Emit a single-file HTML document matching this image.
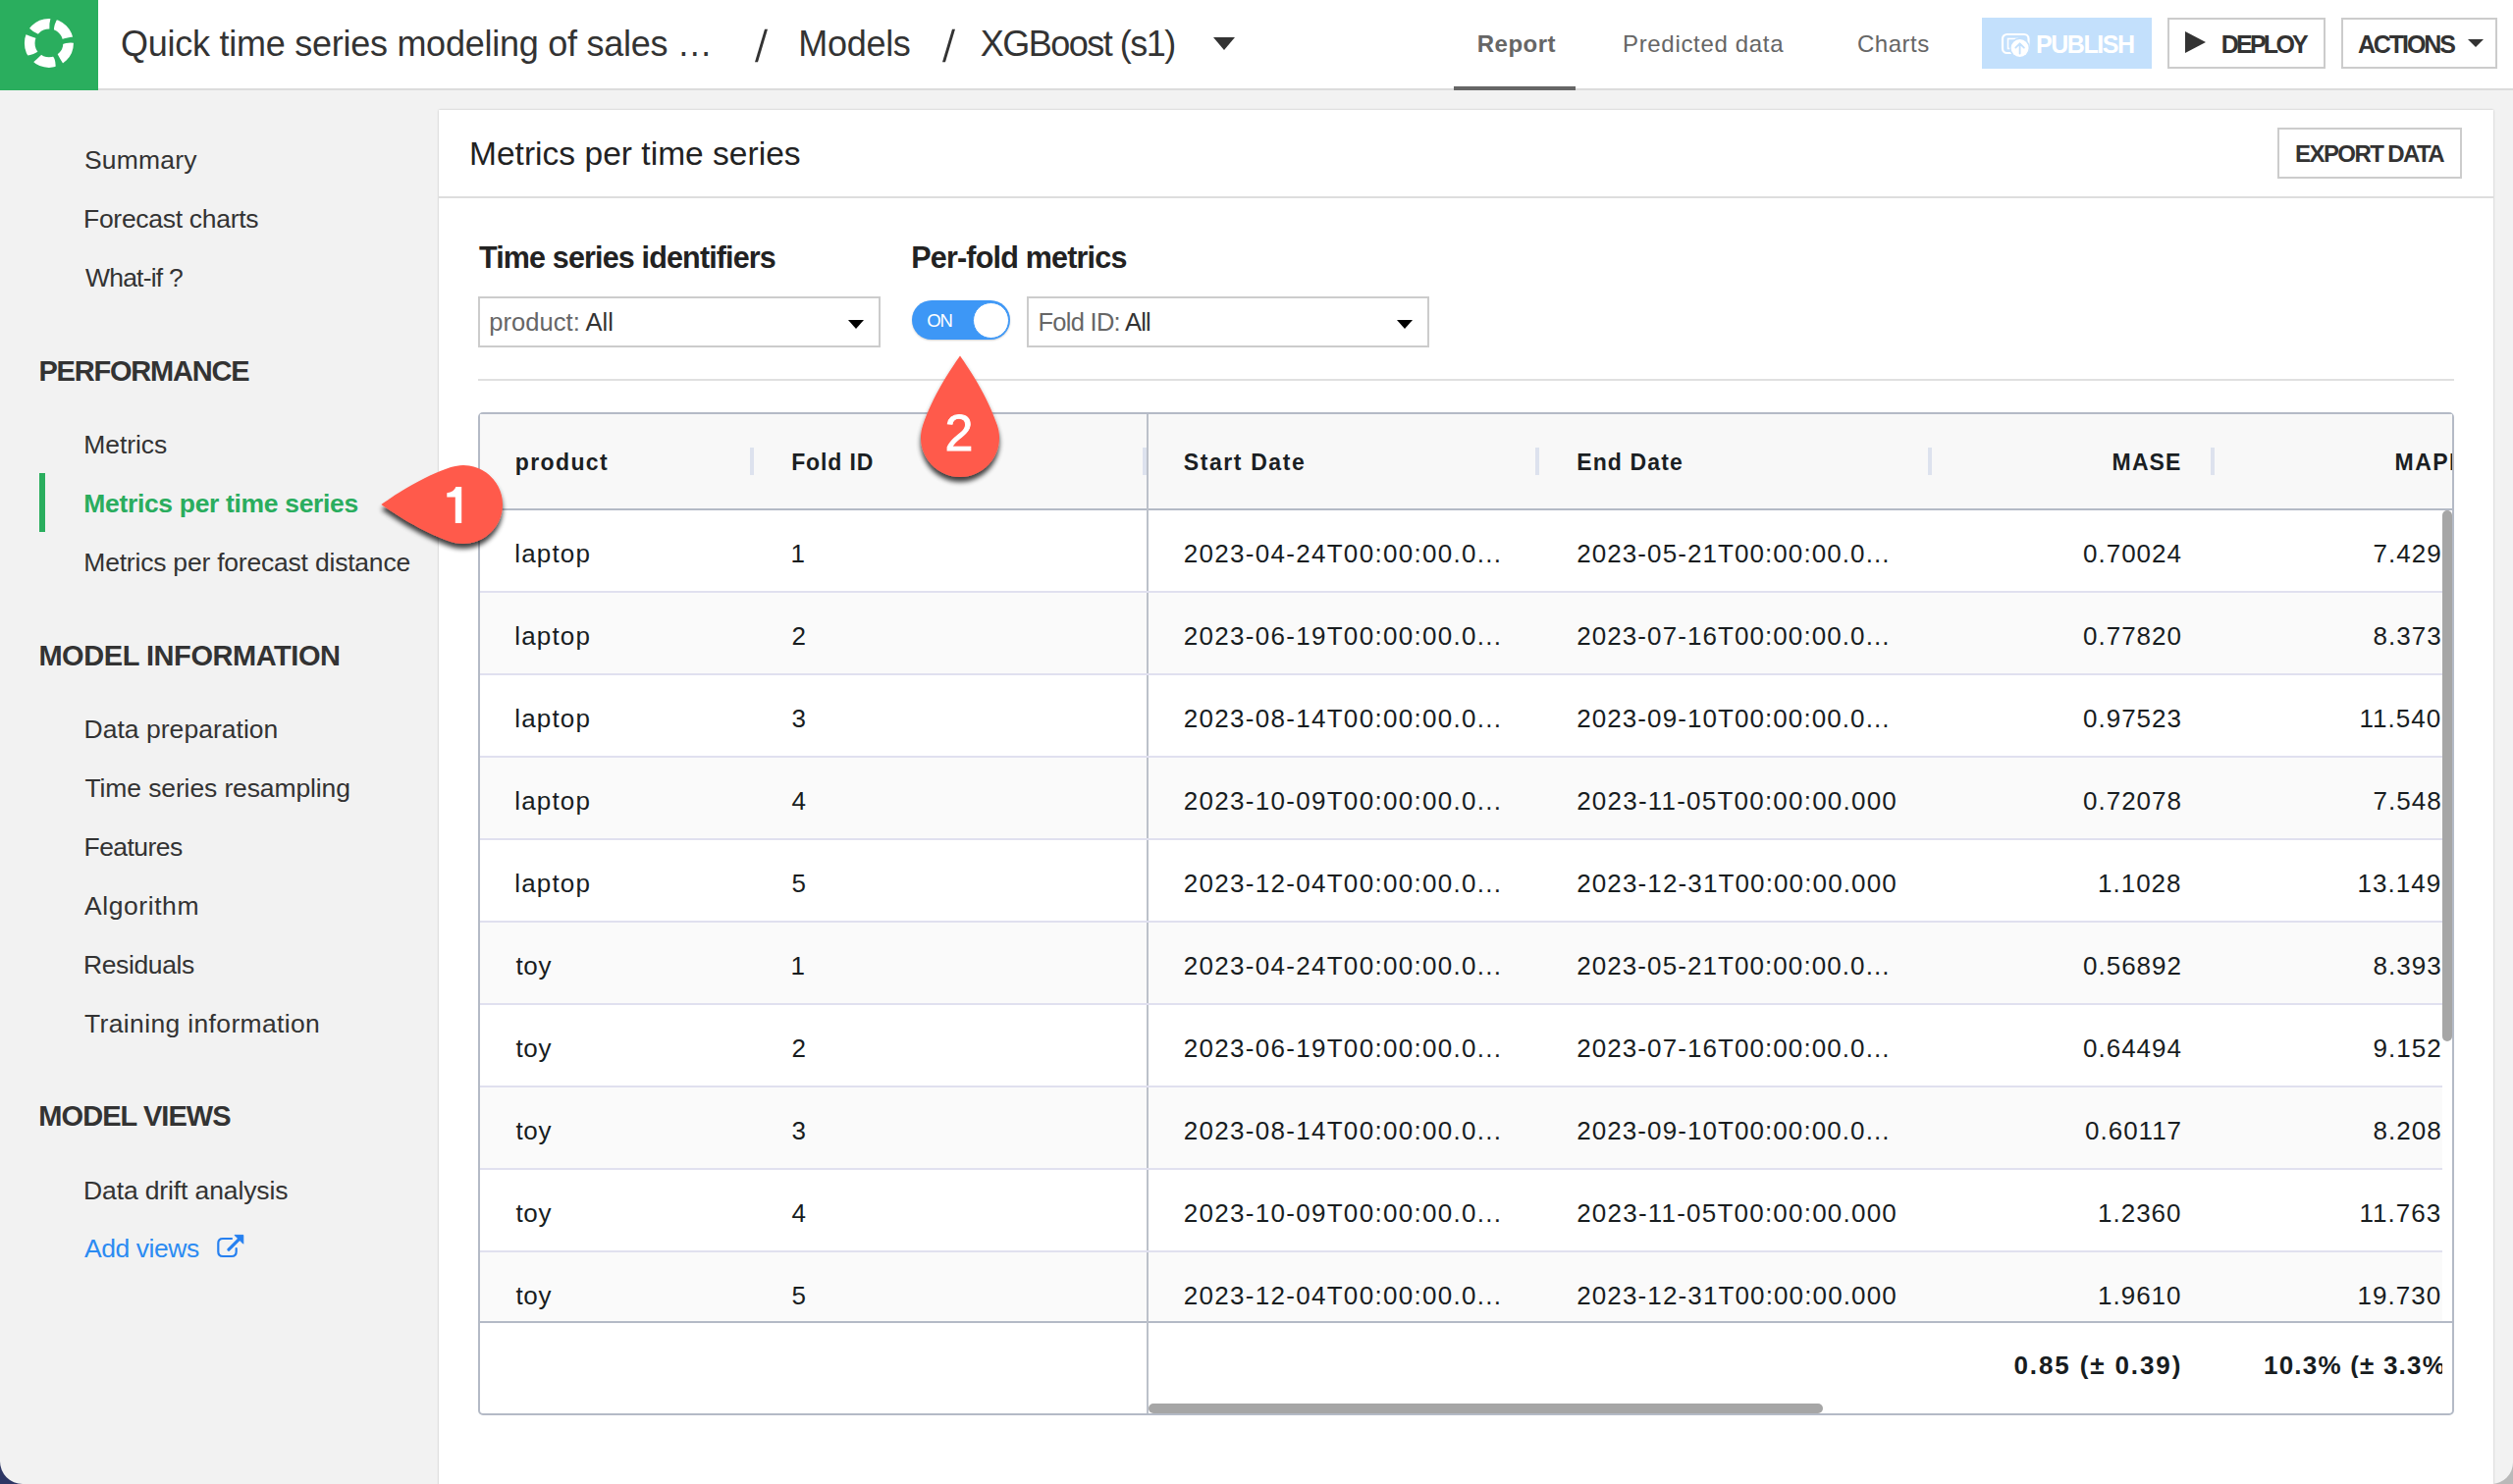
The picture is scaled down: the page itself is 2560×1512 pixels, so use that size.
<!DOCTYPE html>
<html><head><meta charset="utf-8">
<style>
html,body{margin:0;padding:0;}
body{width:2560px;height:1512px;overflow:hidden;position:relative;background:#f2f2f2;font-family:"Liberation Sans",sans-serif;}
.a{position:absolute;box-sizing:border-box;}
.t{position:absolute;white-space:pre;line-height:1;font-family:"Liberation Sans",sans-serif;}
</style></head><body>
<!-- top bar -->
<div class="a" style="left:0;top:0;width:2560px;height:90px;background:#fff;"></div>
<div class="a" style="left:0;top:90px;width:2560px;height:2px;background:#dcdcdc;"></div>
<div class="a" style="left:0;top:0;width:100px;height:92px;background:#2aae5e;"></div>
<svg class="a" style="left:0;top:0" width="100" height="91" viewBox="0 0 100 91">
  <g transform="translate(20,14) scale(0.040437)">
  <circle cx="740" cy="740" r="487" fill="none" stroke="#fff" stroke-width="262"/>
  <g fill="#2aae5e">
    <path d="M790 60 Q735 250 750 440 L860 440 Q860 260 980 80 Z"/>
    <path d="M1400 580 Q1190 590 1050 650 L1060 770 Q1220 705 1420 740 Z"/>
    <path d="M900 1420 Q930 1190 830 1050 L950 1010 Q1010 1130 1120 1300 Z"/>
    <path d="M180 1060 Q360 1040 490 930 L550 1030 Q440 1140 300 1260 Z"/>
    <path d="M200 330 Q330 460 480 520 L420 620 Q280 580 120 510 Z"/>
  </g>
  </g>
</svg>
<svg class="a" style="left:0;top:0" width="1000" height="92" viewBox="0 0 1000 92">
  <polygon points="779,29.8 782,29.8 772,63.3 769,63.3" fill="#333"/>
  <polygon points="970,29.8 973,29.8 963,63.3 960,63.3" fill="#333"/>
</svg>
<!-- breadcrumb caret -->
<div class="a" style="left:1236px;top:38px;width:0;height:0;border-left:11px solid transparent;border-right:11px solid transparent;border-top:13px solid #333;"></div>
<!-- tab underline -->
<div class="a" style="left:1481px;top:88px;width:124px;height:4px;background:#666;"></div>
<!-- publish button -->
<div class="a" style="left:2019px;top:18px;width:173px;height:52px;background:#c3e0fc;"></div>
<svg class="a" style="left:2036px;top:30px" width="36" height="32" viewBox="0 0 36 32">
  <rect x="4" y="5" width="26.5" height="19" rx="4.5" fill="none" stroke="#fff" stroke-width="2.2"/>
  <rect x="9.5" y="9.5" width="10" height="10" fill="none" stroke="#fff" stroke-width="1.6"/>
  <circle cx="21.6" cy="19" r="10.5" fill="#c3e0fc"/>
  <circle cx="21.6" cy="19" r="9" fill="#fff"/>
  <path d="M21.6 24.5 V14.5 M17.3 18.6 L21.6 14.3 L25.9 18.6" fill="none" stroke="#c3e0fc" stroke-width="1.8" stroke-linecap="round" stroke-linejoin="round"/>
</svg>
<!-- deploy button -->
<div class="a" style="left:2208px;top:18px;width:161px;height:52px;border:2px solid #cccccc;background:#fff;"></div>
<div class="a" style="left:2226px;top:32px;width:0;height:0;border-top:11.5px solid transparent;border-bottom:11.5px solid transparent;border-left:21px solid #333;"></div>
<!-- actions button -->
<div class="a" style="left:2385px;top:18px;width:159px;height:52px;border:2px solid #cccccc;background:#fff;"></div>
<div class="a" style="left:2514px;top:40px;width:0;height:0;border-left:8px solid transparent;border-right:8px solid transparent;border-top:8px solid #333;"></div>

<!-- sidebar -->
<div class="a" style="left:40px;top:482px;width:6px;height:60px;background:#2aae5e;"></div>
<svg class="a" style="left:218px;top:1255px" width="34" height="30" viewBox="218 1255 34 30">
  <path d="M236 1262 H227 Q222.3 1262 222.3 1266.7 V1275.3 Q222.3 1280 227 1280 H236 Q240.7 1280 240.7 1275.3 V1272" fill="none" stroke="#2680f0" stroke-width="2.2" stroke-linecap="round"/>
  <path d="M233 1273.2 L243 1263.2" stroke="#2680f0" stroke-width="3.2" stroke-linecap="round"/>
  <path d="M239 1258.4 H247.8 V1267.2 Z" fill="#2680f0" stroke="#2680f0" stroke-width="1" stroke-linejoin="round"/>
</svg>

<!-- panel -->
<div class="a" style="left:447px;top:112px;width:2093px;height:1420px;background:#fff;box-shadow:0 0 2px rgba(0,0,0,0.22);"></div>
<div class="a" style="left:447px;top:200px;width:2093px;height:2px;background:#dddddd;"></div>
<div class="a" style="left:2320px;top:130px;width:188px;height:52px;border:2px solid #cccccc;"></div>
<!-- filters -->
<div class="a" style="left:487px;top:302px;width:410px;height:52px;border:2px solid #cccccc;"></div>
<div class="a" style="left:864px;top:326px;width:0;height:0;border-left:8px solid transparent;border-right:8px solid transparent;border-top:9px solid #000;"></div>
<div class="a" style="left:929px;top:306px;width:100px;height:40px;border-radius:20px;background:#3d97f6;box-shadow:0 1px 2px rgba(0,0,0,0.18);"></div>
<div class="a" style="left:991px;top:307.5px;width:37px;height:37px;border-radius:50%;background:#fff;border:1.5px solid #3d97f6;"></div>
<div class="a" style="left:1046px;top:302px;width:410px;height:52px;border:2px solid #cccccc;"></div>
<div class="a" style="left:1423px;top:326px;width:0;height:0;border-left:8px solid transparent;border-right:8px solid transparent;border-top:9px solid #000;"></div>
<div class="a" style="left:487px;top:386px;width:2013px;height:2px;background:#e0e0e0;"></div>

<!-- table -->
<div class="a" style="left:487px;top:420px;width:2013px;height:1022px;border:2px solid #b4bac6;border-radius:5px;background:#fff;overflow:hidden;">
</div>
<div class="a" style="left:489px;top:422px;width:2009px;height:96px;background:#f8f8f8;"></div>
<div class="a" style="left:489px;top:518px;width:2009px;height:2px;background:#b4bac6;"></div>
<!-- rows -->
<div id="rows"></div>
<div class="a" style="left:489px;top:520px;width:1999px;height:82px;background:#ffffff;"></div>
<div class="a" style="left:489px;top:602px;width:1999px;height:2px;background:#e0e0ef;"></div>
<div class="a" style="left:489px;top:604px;width:1999px;height:82px;background:#fafafa;"></div>
<div class="a" style="left:489px;top:686px;width:1999px;height:2px;background:#e0e0ef;"></div>
<div class="a" style="left:489px;top:688px;width:1999px;height:82px;background:#ffffff;"></div>
<div class="a" style="left:489px;top:770px;width:1999px;height:2px;background:#e0e0ef;"></div>
<div class="a" style="left:489px;top:772px;width:1999px;height:82px;background:#fafafa;"></div>
<div class="a" style="left:489px;top:854px;width:1999px;height:2px;background:#e0e0ef;"></div>
<div class="a" style="left:489px;top:856px;width:1999px;height:82px;background:#ffffff;"></div>
<div class="a" style="left:489px;top:938px;width:1999px;height:2px;background:#e0e0ef;"></div>
<div class="a" style="left:489px;top:940px;width:1999px;height:82px;background:#fafafa;"></div>
<div class="a" style="left:489px;top:1022px;width:1999px;height:2px;background:#e0e0ef;"></div>
<div class="a" style="left:489px;top:1024px;width:1999px;height:82px;background:#ffffff;"></div>
<div class="a" style="left:489px;top:1106px;width:1999px;height:2px;background:#e0e0ef;"></div>
<div class="a" style="left:489px;top:1108px;width:1999px;height:82px;background:#fafafa;"></div>
<div class="a" style="left:489px;top:1190px;width:1999px;height:2px;background:#e0e0ef;"></div>
<div class="a" style="left:489px;top:1192px;width:1999px;height:82px;background:#ffffff;"></div>
<div class="a" style="left:489px;top:1274px;width:1999px;height:2px;background:#e0e0ef;"></div>
<div class="a" style="left:489px;top:1276px;width:1999px;height:70px;background:#fafafa;"></div>
<div class="a" style="left:489px;top:1346px;width:2009px;height:2px;background:#b4bac6;"></div>
<!-- pinned col border -->
<div class="a" style="left:1168px;top:422px;width:2px;height:1018px;background:#bcc1ca;"></div>
<div class="a" style="left:1168px;top:602px;width:2px;height:2px;background:#e0e0ef;"></div>
<div class="a" style="left:1168px;top:686px;width:2px;height:2px;background:#e0e0ef;"></div>
<div class="a" style="left:1168px;top:770px;width:2px;height:2px;background:#e0e0ef;"></div>
<div class="a" style="left:1168px;top:854px;width:2px;height:2px;background:#e0e0ef;"></div>
<div class="a" style="left:1168px;top:938px;width:2px;height:2px;background:#e0e0ef;"></div>
<div class="a" style="left:1168px;top:1022px;width:2px;height:2px;background:#e0e0ef;"></div>
<div class="a" style="left:1168px;top:1106px;width:2px;height:2px;background:#e0e0ef;"></div>
<div class="a" style="left:1168px;top:1190px;width:2px;height:2px;background:#e0e0ef;"></div>
<div class="a" style="left:1168px;top:1274px;width:2px;height:2px;background:#e0e0ef;"></div>
<!-- resize handles -->
<div class="a" style="left:764px;top:456px;width:4px;height:28px;background:#dde2ee;"></div>
<div class="a" style="left:1164px;top:456px;width:4px;height:28px;background:#dde2ee;"></div>
<div class="a" style="left:1564px;top:456px;width:4px;height:28px;background:#dde2ee;"></div>
<div class="a" style="left:1964px;top:456px;width:4px;height:28px;background:#dde2ee;"></div>
<div class="a" style="left:2252px;top:456px;width:4px;height:28px;background:#dde2ee;"></div>
<!-- scrollbars -->
<div class="a" style="left:2488px;top:520px;width:10px;height:541px;background:#a6a6a6;border-radius:5px;"></div>
<div class="a" style="left:1170px;top:1430px;width:687px;height:10px;background:#a6a6a6;border-radius:5px 5px 5px 5px;"></div>

<div class="t" style="left:123.0px;top:27.0px;font-size:36px;font-weight:400;color:#333333;letter-spacing:-0.26px;">Quick time series modeling of sales …</div>
<div class="t" style="left:813.3px;top:27.0px;font-size:36px;font-weight:400;color:#333333;letter-spacing:-0.3px;">Models</div>
<div class="t" style="left:998.7px;top:27.0px;font-size:36px;font-weight:400;color:#333333;letter-spacing:-1.5px;">XGBoost (s1)</div>
<div class="t" style="left:1504.8px;top:32.6px;font-size:24px;font-weight:700;color:#666666;letter-spacing:0.48px;">Report</div>
<div class="t" style="left:1653.0px;top:32.6px;font-size:24px;font-weight:400;color:#666666;letter-spacing:0.67px;">Predicted data</div>
<div class="t" style="left:1892.0px;top:32.6px;font-size:24px;font-weight:400;color:#666666;letter-spacing:0.5px;">Charts</div>
<div class="t" style="left:2074.0px;top:32.5px;font-size:25px;font-weight:700;color:#ffffff;letter-spacing:-1.43px;">PUBLISH</div>
<div class="t" style="left:2262.7px;top:32.5px;font-size:25px;font-weight:700;color:#333333;letter-spacing:-2.74px;">DEPLOY</div>
<div class="t" style="left:2401.9px;top:32.5px;font-size:25px;font-weight:700;color:#333333;letter-spacing:-2.08px;">ACTIONS</div>
<div class="t" style="left:86.0px;top:150.2px;font-size:26.5px;font-weight:400;color:#333333;letter-spacing:0.17px;">Summary</div>
<div class="t" style="left:85.0px;top:210.0px;font-size:26.5px;font-weight:400;color:#333333;letter-spacing:-0.29px;">Forecast charts</div>
<div class="t" style="left:87.0px;top:270.0px;font-size:26.5px;font-weight:400;color:#333333;letter-spacing:-0.79px;">What-if ?</div>
<div class="t" style="left:39.5px;top:364.0px;font-size:29px;font-weight:700;color:#333333;letter-spacing:-1.22px;">PERFORMANCE</div>
<div class="t" style="left:85.3px;top:440.0px;font-size:26.5px;font-weight:400;color:#333333;letter-spacing:-0.08px;">Metrics</div>
<div class="t" style="left:85.3px;top:500.0px;font-size:26.5px;font-weight:700;color:#2aad5e;letter-spacing:-0.33px;">Metrics per time series</div>
<div class="t" style="left:85.3px;top:560.0px;font-size:26.5px;font-weight:400;color:#333333;letter-spacing:-0.21px;">Metrics per forecast distance</div>
<div class="t" style="left:39.4px;top:653.7px;font-size:29px;font-weight:700;color:#333333;letter-spacing:-0.44px;">MODEL INFORMATION</div>
<div class="t" style="left:85.5px;top:730.0px;font-size:26.5px;font-weight:400;color:#333333;letter-spacing:0.03px;">Data preparation</div>
<div class="t" style="left:86.5px;top:790.0px;font-size:26.5px;font-weight:400;color:#333333;letter-spacing:-0.12px;">Time series resampling</div>
<div class="t" style="left:85.5px;top:850.0px;font-size:26.5px;font-weight:400;color:#333333;letter-spacing:-0.56px;">Features</div>
<div class="t" style="left:86.0px;top:910.0px;font-size:26.5px;font-weight:400;color:#333333;letter-spacing:0.57px;">Algorithm</div>
<div class="t" style="left:85.0px;top:970.0px;font-size:26.5px;font-weight:400;color:#333333;letter-spacing:-0.38px;">Residuals</div>
<div class="t" style="left:86.0px;top:1030.0px;font-size:26.5px;font-weight:400;color:#333333;letter-spacing:0.35px;">Training information</div>
<div class="t" style="left:39.3px;top:1123.4px;font-size:29px;font-weight:700;color:#333333;letter-spacing:-0.94px;">MODEL VIEWS</div>
<div class="t" style="left:85.0px;top:1200.0px;font-size:26.5px;font-weight:400;color:#333333;letter-spacing:-0.12px;">Data drift analysis</div>
<div class="t" style="left:86.0px;top:1259.4px;font-size:26.5px;font-weight:400;color:#2b8bf2;letter-spacing:-0.44px;">Add views</div>
<div class="t" style="left:478.0px;top:139.6px;font-size:33.5px;font-weight:400;color:#222222;letter-spacing:0.03px;">Metrics per time series</div>
<div class="t" style="left:2338.1px;top:144.8px;font-size:24px;font-weight:700;color:#333333;letter-spacing:-1.59px;">EXPORT DATA</div>
<div class="t" style="left:488.0px;top:247.2px;font-size:30.5px;font-weight:700;color:#222222;letter-spacing:-0.85px;">Time series identifiers</div>
<div class="t" style="left:928.2px;top:247.3px;font-size:30.5px;font-weight:700;color:#222222;letter-spacing:-0.8px;">Per-fold metrics</div>
<div class="t" style="left:498.3px;top:316.0px;font-size:25.5px;font-weight:400;color:#333333;letter-spacing:0.04px;"><span style="color:#666">product:</span> All</div>
<div class="t" style="left:1057.5px;top:315.8px;font-size:25.5px;font-weight:400;color:#333333;letter-spacing:-0.73px;"><span style="color:#666">Fold ID:</span> All</div>
<div class="t" style="left:944.3px;top:317.7px;font-size:18.5px;font-weight:400;color:#ffffff;letter-spacing:-1.3px;">ON</div>
<div class="t" style="left:524.8px;top:459.7px;font-size:23px;font-weight:700;color:#1b1f23;letter-spacing:1.38px;">product</div>
<div class="t" style="left:806.2px;top:459.7px;font-size:23px;font-weight:700;color:#1b1f23;letter-spacing:0.87px;">Fold ID</div>
<div class="t" style="left:1205.7px;top:459.7px;font-size:23px;font-weight:700;color:#1b1f23;letter-spacing:1.61px;">Start Date</div>
<div class="t" style="left:1606.2px;top:459.7px;font-size:23px;font-weight:700;color:#1b1f23;letter-spacing:1.14px;">End Date</div>
<div class="t" style="left:2151.6px;top:459.7px;font-size:23px;font-weight:700;color:#1b1f23;letter-spacing:1.13px;">MASE</div>
<div class="t" style="left:2439.5px;top:459.7px;font-size:23px;font-weight:700;color:#1b1f23;letter-spacing:1.5px;width:58.5px;overflow:hidden;">MAPE</div>
<div class="t" style="left:524.3px;top:550.6px;font-size:26px;font-weight:400;color:#181d1f;letter-spacing:1.14px;">laptop</div>
<div class="t" style="left:805.5px;top:550.6px;font-size:26px;font-weight:400;color:#181d1f;letter-spacing:1.0px;">1</div>
<div class="t" style="left:1205.7px;top:550.6px;font-size:26px;font-weight:400;color:#181d1f;letter-spacing:1.3px;">2023-04-24T00:00:00.0...</div>
<div class="t" style="left:1606.2px;top:550.6px;font-size:26px;font-weight:400;color:#181d1f;letter-spacing:1.08px;">2023-05-21T00:00:00.0...</div>
<div class="t" style="left:2122.0px;top:550.6px;font-size:26px;font-weight:400;color:#181d1f;letter-spacing:1.0px;">0.70024</div>
<div class="t" style="left:2417.6px;top:550.6px;font-size:26px;font-weight:400;color:#181d1f;letter-spacing:1.0px;width:70.4px;overflow:hidden;">7.4297</div>
<div class="t" style="left:524.3px;top:634.6px;font-size:26px;font-weight:400;color:#181d1f;letter-spacing:1.14px;">laptop</div>
<div class="t" style="left:806.5px;top:634.6px;font-size:26px;font-weight:400;color:#181d1f;letter-spacing:1.0px;">2</div>
<div class="t" style="left:1205.7px;top:634.6px;font-size:26px;font-weight:400;color:#181d1f;letter-spacing:1.3px;">2023-06-19T00:00:00.0...</div>
<div class="t" style="left:1606.2px;top:634.6px;font-size:26px;font-weight:400;color:#181d1f;letter-spacing:1.08px;">2023-07-16T00:00:00.0...</div>
<div class="t" style="left:2122.0px;top:634.6px;font-size:26px;font-weight:400;color:#181d1f;letter-spacing:1.0px;">0.77820</div>
<div class="t" style="left:2417.6px;top:634.6px;font-size:26px;font-weight:400;color:#181d1f;letter-spacing:1.0px;width:70.4px;overflow:hidden;">8.3733</div>
<div class="t" style="left:524.3px;top:718.6px;font-size:26px;font-weight:400;color:#181d1f;letter-spacing:1.14px;">laptop</div>
<div class="t" style="left:806.5px;top:718.6px;font-size:26px;font-weight:400;color:#181d1f;letter-spacing:1.0px;">3</div>
<div class="t" style="left:1205.7px;top:718.6px;font-size:26px;font-weight:400;color:#181d1f;letter-spacing:1.3px;">2023-08-14T00:00:00.0...</div>
<div class="t" style="left:1606.2px;top:718.6px;font-size:26px;font-weight:400;color:#181d1f;letter-spacing:1.08px;">2023-09-10T00:00:00.0...</div>
<div class="t" style="left:2122.0px;top:718.6px;font-size:26px;font-weight:400;color:#181d1f;letter-spacing:1.0px;">0.97523</div>
<div class="t" style="left:2403.6px;top:718.6px;font-size:26px;font-weight:400;color:#181d1f;letter-spacing:1.0px;width:84.4px;overflow:hidden;">11.5409</div>
<div class="t" style="left:524.3px;top:802.6px;font-size:26px;font-weight:400;color:#181d1f;letter-spacing:1.14px;">laptop</div>
<div class="t" style="left:806.5px;top:802.6px;font-size:26px;font-weight:400;color:#181d1f;letter-spacing:1.0px;">4</div>
<div class="t" style="left:1205.7px;top:802.6px;font-size:26px;font-weight:400;color:#181d1f;letter-spacing:1.3px;">2023-10-09T00:00:00.0...</div>
<div class="t" style="left:1606.2px;top:802.6px;font-size:26px;font-weight:400;color:#181d1f;letter-spacing:1.22px;">2023-11-05T00:00:00.000</div>
<div class="t" style="left:2122.0px;top:802.6px;font-size:26px;font-weight:400;color:#181d1f;letter-spacing:1.0px;">0.72078</div>
<div class="t" style="left:2417.6px;top:802.6px;font-size:26px;font-weight:400;color:#181d1f;letter-spacing:1.0px;width:70.4px;overflow:hidden;">7.5481</div>
<div class="t" style="left:524.3px;top:886.6px;font-size:26px;font-weight:400;color:#181d1f;letter-spacing:1.14px;">laptop</div>
<div class="t" style="left:806.5px;top:886.6px;font-size:26px;font-weight:400;color:#181d1f;letter-spacing:1.0px;">5</div>
<div class="t" style="left:1205.7px;top:886.6px;font-size:26px;font-weight:400;color:#181d1f;letter-spacing:1.3px;">2023-12-04T00:00:00.0...</div>
<div class="t" style="left:1606.2px;top:886.6px;font-size:26px;font-weight:400;color:#181d1f;letter-spacing:1.13px;">2023-12-31T00:00:00.000</div>
<div class="t" style="left:2137.0px;top:886.6px;font-size:26px;font-weight:400;color:#181d1f;letter-spacing:1.0px;">1.1028</div>
<div class="t" style="left:2401.6px;top:886.6px;font-size:26px;font-weight:400;color:#181d1f;letter-spacing:1.0px;width:86.4px;overflow:hidden;">13.1491</div>
<div class="t" style="left:525.5px;top:970.6px;font-size:26px;font-weight:400;color:#181d1f;letter-spacing:0.65px;">toy</div>
<div class="t" style="left:805.5px;top:970.6px;font-size:26px;font-weight:400;color:#181d1f;letter-spacing:1.0px;">1</div>
<div class="t" style="left:1205.7px;top:970.6px;font-size:26px;font-weight:400;color:#181d1f;letter-spacing:1.3px;">2023-04-24T00:00:00.0...</div>
<div class="t" style="left:1606.2px;top:970.6px;font-size:26px;font-weight:400;color:#181d1f;letter-spacing:1.08px;">2023-05-21T00:00:00.0...</div>
<div class="t" style="left:2122.0px;top:970.6px;font-size:26px;font-weight:400;color:#181d1f;letter-spacing:1.0px;">0.56892</div>
<div class="t" style="left:2417.6px;top:970.6px;font-size:26px;font-weight:400;color:#181d1f;letter-spacing:1.0px;width:70.4px;overflow:hidden;">8.3931</div>
<div class="t" style="left:525.5px;top:1054.6px;font-size:26px;font-weight:400;color:#181d1f;letter-spacing:0.65px;">toy</div>
<div class="t" style="left:806.5px;top:1054.6px;font-size:26px;font-weight:400;color:#181d1f;letter-spacing:1.0px;">2</div>
<div class="t" style="left:1205.7px;top:1054.6px;font-size:26px;font-weight:400;color:#181d1f;letter-spacing:1.3px;">2023-06-19T00:00:00.0...</div>
<div class="t" style="left:1606.2px;top:1054.6px;font-size:26px;font-weight:400;color:#181d1f;letter-spacing:1.08px;">2023-07-16T00:00:00.0...</div>
<div class="t" style="left:2122.0px;top:1054.6px;font-size:26px;font-weight:400;color:#181d1f;letter-spacing:1.0px;">0.64494</div>
<div class="t" style="left:2417.6px;top:1054.6px;font-size:26px;font-weight:400;color:#181d1f;letter-spacing:1.0px;width:70.4px;overflow:hidden;">9.1527</div>
<div class="t" style="left:525.5px;top:1138.6px;font-size:26px;font-weight:400;color:#181d1f;letter-spacing:0.65px;">toy</div>
<div class="t" style="left:806.5px;top:1138.6px;font-size:26px;font-weight:400;color:#181d1f;letter-spacing:1.0px;">3</div>
<div class="t" style="left:1205.7px;top:1138.6px;font-size:26px;font-weight:400;color:#181d1f;letter-spacing:1.3px;">2023-08-14T00:00:00.0...</div>
<div class="t" style="left:1606.2px;top:1138.6px;font-size:26px;font-weight:400;color:#181d1f;letter-spacing:1.08px;">2023-09-10T00:00:00.0...</div>
<div class="t" style="left:2124.0px;top:1138.6px;font-size:26px;font-weight:400;color:#181d1f;letter-spacing:1.0px;">0.60117</div>
<div class="t" style="left:2417.6px;top:1138.6px;font-size:26px;font-weight:400;color:#181d1f;letter-spacing:1.0px;width:70.4px;overflow:hidden;">8.2081</div>
<div class="t" style="left:525.5px;top:1222.6px;font-size:26px;font-weight:400;color:#181d1f;letter-spacing:0.65px;">toy</div>
<div class="t" style="left:806.5px;top:1222.6px;font-size:26px;font-weight:400;color:#181d1f;letter-spacing:1.0px;">4</div>
<div class="t" style="left:1205.7px;top:1222.6px;font-size:26px;font-weight:400;color:#181d1f;letter-spacing:1.3px;">2023-10-09T00:00:00.0...</div>
<div class="t" style="left:1606.2px;top:1222.6px;font-size:26px;font-weight:400;color:#181d1f;letter-spacing:1.22px;">2023-11-05T00:00:00.000</div>
<div class="t" style="left:2137.0px;top:1222.6px;font-size:26px;font-weight:400;color:#181d1f;letter-spacing:1.0px;">1.2360</div>
<div class="t" style="left:2403.6px;top:1222.6px;font-size:26px;font-weight:400;color:#181d1f;letter-spacing:1.0px;width:84.4px;overflow:hidden;">11.7631</div>
<div class="t" style="left:525.5px;top:1306.6px;font-size:26px;font-weight:400;color:#181d1f;letter-spacing:0.65px;">toy</div>
<div class="t" style="left:806.5px;top:1306.6px;font-size:26px;font-weight:400;color:#181d1f;letter-spacing:1.0px;">5</div>
<div class="t" style="left:1205.7px;top:1306.6px;font-size:26px;font-weight:400;color:#181d1f;letter-spacing:1.3px;">2023-12-04T00:00:00.0...</div>
<div class="t" style="left:1606.2px;top:1306.6px;font-size:26px;font-weight:400;color:#181d1f;letter-spacing:1.13px;">2023-12-31T00:00:00.000</div>
<div class="t" style="left:2137.0px;top:1306.6px;font-size:26px;font-weight:400;color:#181d1f;letter-spacing:1.0px;">1.9610</div>
<div class="t" style="left:2401.6px;top:1306.6px;font-size:26px;font-weight:400;color:#181d1f;letter-spacing:1.0px;width:86.4px;overflow:hidden;">19.7301</div>
<div class="t" style="left:2051.5px;top:1378.0px;font-size:26px;font-weight:700;color:#181d1f;letter-spacing:1.88px;">0.85 (± 0.39)</div>
<div class="t" style="left:2306.0px;top:1378.0px;font-size:26px;font-weight:700;color:#181d1f;letter-spacing:1.2px;width:182.0px;overflow:hidden;">10.3% (± 3.3%)</div>

<!-- callouts -->
<svg class="a" style="left:0;top:0;overflow:visible" width="2560" height="1512" viewBox="0 0 2560 1512">
  <defs><filter id="sh" x="-30%" y="-30%" width="160%" height="160%"><feGaussianBlur in="SourceAlpha" stdDeviation="2.5"/><feOffset dx="0" dy="5" result="b"/><feComponentTransfer><feFuncA type="linear" slope="0.75"/></feComponentTransfer><feMerge><feMergeNode/><feMergeNode in="SourceGraphic"/></feMerge></filter></defs>
  <path d="M388.40 514.00 C402.53 504.32 428.78 486.33 459.25 476.09 A40 40 0 1 1 459.25 551.91 C428.78 541.67 402.53 523.68 388.40 514.00 Z" fill="#ff5a4b" filter="url(#sh)"/><path d="M978.00 362.40 C987.68 376.53 1005.67 402.78 1015.91 433.25 A40 40 0 1 1 940.09 433.25 C950.33 402.78 968.32 376.53 978.00 362.40 Z" fill="#ff5a4b" filter="url(#sh)"/>
</svg>
<div class="t" style="left:962.4px;top:415.0px;font-size:52px;font-weight:400;color:#ffffff;-webkit-text-stroke:0.9px #fff;">2</div>
<svg class="a" style="left:0;top:0" width="600" height="600" viewBox="0 0 600 600"><path d="M463.8 532.9 V506.6 H455.3 V502.3 Q462.6 501.6 464.4 496.1 H470.2 V532.9 Z" fill="#fff"/></svg>

<!-- window corners -->
<svg class="a" style="left:0;top:1489px" width="23" height="23" viewBox="0 0 23 23"><path d="M0 0 V23 H23 A23 23 0 0 1 0 0 Z" fill="#2e3765"/></svg>
<svg class="a" style="left:2538px;top:1490px" width="22" height="22" viewBox="0 0 22 22"><path d="M22 0 V22 H0 A22 22 0 0 0 22 0 Z" fill="#b9b9b9"/></svg>
</body></html>
